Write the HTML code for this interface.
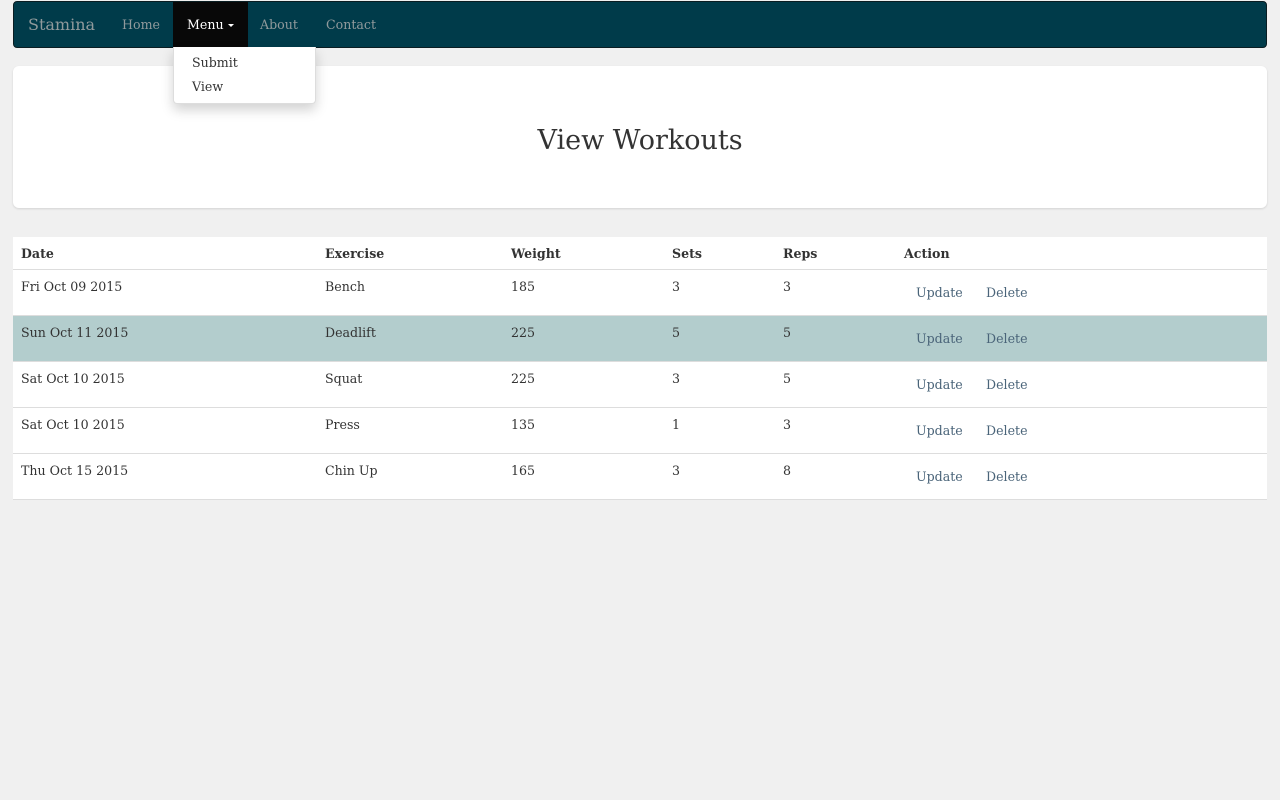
<!DOCTYPE html>
<html><head><style>
*{margin:0;padding:0;box-sizing:border-box}
body{width:1280px;height:800px;background:#f0f0f0;font-family:"DejaVu Serif",serif;font-size:12.6px;color:#333;position:relative;overflow:hidden}
.nav{position:absolute;left:13px;top:1px;width:1254px;height:47px;background:#003b4a;border:1px solid #0a1d22;border-radius:4px}
.nav span{position:absolute;top:0;line-height:45px;color:#909a9c}
.brand{font-size:16px;left:14px}
.act{background:#080808;color:#fff!important;padding:0 14px;left:159px;top:0!important;height:45px;line-height:45px!important}
.caret{display:inline-block;width:0;height:0;border-left:3px solid transparent;border-right:3px solid transparent;border-top:3px solid #fff;vertical-align:2px}
.dd{position:absolute;z-index:5;left:173px;top:47px;width:143px;height:57px;background:#fff;border-radius:0 0 4px 4px;box-shadow:0 6px 12px rgba(0,0,0,.18);border:1px solid #ddd;border-top:none}
.dd div{position:absolute;left:18px}
.jumbo{position:absolute;left:13px;top:66px;width:1254px;height:142px;background:#fff;border-radius:6px;box-shadow:0 1px 2px rgba(0,0,0,.12)}
.jumbo h1{font-weight:normal;font-size:27px;text-align:center;line-height:30px;margin-top:60px}
.tbl{position:absolute;left:13px;top:237px;width:1254px;background:#fff}
.row{position:relative;height:46px;border-top:1px solid #ddd}
.row.h{height:32px;border-top:none;font-weight:bold}
.row.alt{background:#b3cdcd}
.row span{position:absolute;top:9px}
.row.h span{top:9px}
.row span.l{top:15px;color:#4a6479}
</style></head><body>
<div class="nav">
<span class="brand">Stamina</span>
<span style="left:108px">Home</span>
<span class="act">Menu <i class="caret"></i></span>
<span style="left:246px">About</span>
<span style="left:312px">Contact</span>
</div>
<div class="dd"><div style="top:8px">Submit</div><div style="top:32px">View</div></div>
<div class="jumbo"><h1>View Workouts</h1></div>
<div class="tbl">
<div class="row h"><span style="left:8px">Date</span><span style="left:312px">Exercise</span><span style="left:498px">Weight</span><span style="left:659px">Sets</span><span style="left:770px">Reps</span><span style="left:891px">Action</span></div>
<div class="row"><span style="left:8px">Fri Oct 09 2015</span><span style="left:312px">Bench</span><span style="left:498px">185</span><span style="left:659px">3</span><span style="left:770px">3</span><span class="l" style="left:903px">Update</span><span class="l" style="left:973px">Delete</span></div>
<div class="row alt"><span style="left:8px">Sun Oct 11 2015</span><span style="left:312px">Deadlift</span><span style="left:498px">225</span><span style="left:659px">5</span><span style="left:770px">5</span><span class="l" style="left:903px">Update</span><span class="l" style="left:973px">Delete</span></div>
<div class="row"><span style="left:8px">Sat Oct 10 2015</span><span style="left:312px">Squat</span><span style="left:498px">225</span><span style="left:659px">3</span><span style="left:770px">5</span><span class="l" style="left:903px">Update</span><span class="l" style="left:973px">Delete</span></div>
<div class="row"><span style="left:8px">Sat Oct 10 2015</span><span style="left:312px">Press</span><span style="left:498px">135</span><span style="left:659px">1</span><span style="left:770px">3</span><span class="l" style="left:903px">Update</span><span class="l" style="left:973px">Delete</span></div>
<div class="row" style="border-bottom:1px solid #ddd;height:47px"><span style="left:8px">Thu Oct 15 2015</span><span style="left:312px">Chin Up</span><span style="left:498px">165</span><span style="left:659px">3</span><span style="left:770px">8</span><span class="l" style="left:903px">Update</span><span class="l" style="left:973px">Delete</span></div>
</div>
</body></html>
